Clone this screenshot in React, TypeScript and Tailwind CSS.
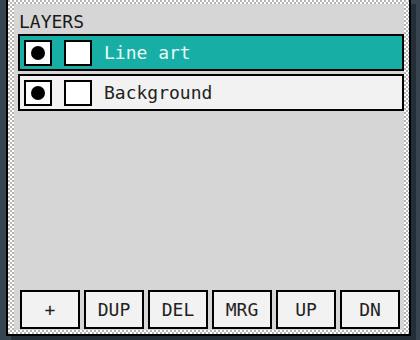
import React from 'react';

const mono = "font-['DejaVu_Sans_Mono','Liberation_Mono',monospace]";
const checker =
  'bg-[repeating-conic-gradient(#ffffff_0_25%,#b4b4b4_0_50%)] bg-[length:4px_4px]';

type Layer = { name: string; active: boolean };

const layers: Layer[] = [
  { name: 'Line art', active: true },
  { name: 'Background', active: false },
];

const actions = ['+', 'DUP', 'DEL', 'MRG', 'UP', 'DN'];

function LayerRow({ layer }: { layer: Layer }) {
  return (
    <div
      className={`flex h-[37px] items-center border-2 border-black pl-[4px] ${
        layer.active ? 'bg-[#17aea6]' : 'bg-[#f2f2f2]'
      }`}
    >
      <div className="flex h-[26px] w-[28px] items-center justify-center border-2 border-black bg-white">
        <div className="h-[14px] w-[14px] rounded-full bg-black" />
      </div>
      <div className="ml-[12px] h-[26px] w-[28px] border-2 border-black bg-white" />
      <span
        className={`ml-[12px] text-[18px] leading-[20px] ${
          layer.active ? 'text-[#e8fbf8]' : 'text-[#222222]'
        }`}
      >
        {layer.name}
      </span>
    </div>
  );
}

export default function App() {
  return (
    <div className={`h-[340px] w-[420px] overflow-hidden bg-[#36454f] ${mono}`}>
      <div
        className={`ml-[6px] h-[336px] w-[405px] border-x-2 border-b-2 border-black pt-[4px] pr-[5px] pb-[4px] pl-[6px] shadow-[5px_4px_0_#232e37] ${checker}`}
      >
        <div className="flex h-[326px] w-[390px] flex-col bg-[#d6d6d6] pb-[1px]">
          <div className="pt-[8px] pl-[5px] text-[18px] leading-[20px] text-[#1a1a1a]">
            LAYERS
          </div>
          <div className="mt-[2px] flex flex-col gap-[3px] pl-[4px]">
            {layers.map((layer) => (
              <LayerRow key={layer.name} layer={layer} />
            ))}
          </div>
          <div className="mt-auto flex gap-[4px] pl-[6px]">
            {actions.map((label) => (
              <button
                key={label}
                className="flex h-[39px] w-[60px] items-center justify-center border-2 border-black bg-[#f2f2f2] text-[18px] leading-[20px] text-[#222222]"
              >
                {label}
              </button>
            ))}
          </div>
        </div>
      </div>
    </div>
  );
}
